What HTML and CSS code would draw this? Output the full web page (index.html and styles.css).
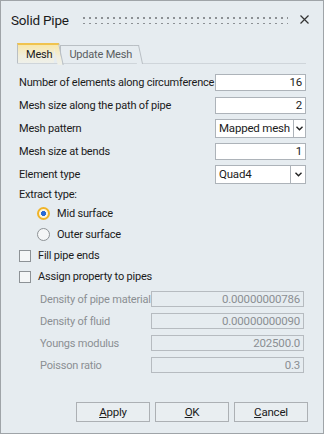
FILE: index.html
```html
<!DOCTYPE html>
<html lang="en">
<head>
    <meta charset="UTF-8">
    <title>Solid Pipe</title>
    <link rel="stylesheet" href="styles.css">
</head>
<body>
    <div class="dialog">
        <div class="titlebar">
            <span class="title">Solid Pipe</span>
            <span class="grip"></span>
            <svg class="close" width="9" height="9" viewBox="0 0 9 9">
                <path d="M0.5 0.5 L8.5 8.5 M8.5 0.5 L0.5 8.5" stroke="#333" stroke-width="1.2" fill="none"/>
            </svg>
        </div>
        <div class="tabs">
            <span class="tab active">Mesh</span>
            <span class="tab">Update Mesh</span>
        </div>
        <div class="form">
            <div class="row"><span class="label">Number of elements along circumference</span><div class="field num">16</div></div>
            <div class="row"><span class="label">Mesh size along the path of pipe</span><div class="field num">2</div></div>
            <div class="row">
                <span class="label">Mesh pattern</span>
                <div class="select"><span class="value">Mapped mesh</span><span class="arrow"><svg width="7" height="5" viewBox="0 0 7 5"><path d="M0.5 0.8 L3.5 3.8 L6.5 0.8" stroke="#222" stroke-width="1.4" fill="none"/></svg></span></div>
            </div>
            <div class="row"><span class="label">Mesh size at bends</span><div class="field num">1</div></div>
            <div class="row">
                <span class="label">Element type</span>
                <div class="select"><span class="value">Quad4</span><span class="arrow"><svg width="7" height="5" viewBox="0 0 7 5"><path d="M0.5 0.8 L3.5 3.8 L6.5 0.8" stroke="#222" stroke-width="1.4" fill="none"/></svg></span></div>
            </div>
        </div>
        <div class="group-label">Extract type:</div>
        <div class="option radio-row"><span class="radio checked"></span>Mid surface</div>
        <div class="option radio-row"><span class="radio"></span>Outer surface</div>
        <div class="option"><span class="check"></span>Fill pipe ends</div>
        <div class="option"><span class="check"></span>Assign property to pipes</div>
        <div class="props">
            <div class="prop"><span class="label">Density of pipe material</span><div class="field disabled">0.00000000786</div></div>
            <div class="prop"><span class="label">Density of fluid</span><div class="field disabled">0.00000000090</div></div>
            <div class="prop"><span class="label">Youngs modulus</span><div class="field disabled">202500.0</div></div>
            <div class="prop"><span class="label">Poisson ratio</span><div class="field disabled">0.3</div></div>
        </div>
        <div class="buttons">
            <button><u>A</u>pply</button>
            <button><u>O</u>K</button>
            <button><u>C</u>ancel</button>
        </div>
    </div>
</body>
</html>
```

FILE: styles.css
```css
body {
    margin: 0;
    font-family: Roboto, "Liberation Sans", sans-serif;
    font-size: 11px;
    letter-spacing: -0.2px;
    color: #1b1b1b;
}
.dialog {
    width: 324px;
    height: 434px;
    box-sizing: border-box;
    border: 1px solid #9fa4a8;
    background: #e6ecf0;
    display: flex;
    flex-direction: column;
}
.titlebar {
    height: 37px;
    display: flex;
    align-items: center;
    padding: 0 9px 0 10px;
}
.title {
    font-size: 13.5px;
    letter-spacing: -0.2px;
    color: #1a1a1a;
}
.grip {
    flex: 1;
    height: 8px;
    margin: 0 12px 0 13px;
    background-image: radial-gradient(circle, #8c9094 0.9px, transparent 1.3px);
    background-size: 6px 6px;
    background-position: -1px -1px;
}
.close {
    display: block;
    margin-right: 5px;
}
.tabs {
    display: flex;
    align-items: flex-end;
    margin: 5px 17px 0 16px;
    height: 20px;
    border-bottom: 1px solid #cfd5da;
}
.tab {
    position: relative;
    height: 17px;
    line-height: 17px;
    padding: 0 2px 0 8px;
    margin-right: 6px;
    border: 1px solid #b9bfc4;
    border-right: none;
    border-bottom: none;
    color: #5a5e62;
    background: #e6ecf0;
}
.tab::after {
    content: "";
    position: absolute;
    top: -1px;
    right: -5px;
    width: 5px;
    height: 18px;
    border-right: 1px solid #b9bfc4;
    border-top: 1px solid #b9bfc4;
    background: inherit;
    transform: skewX(12deg);
    transform-origin: top left;
}
.tab.active {
    height: 18px;
    line-height: 19px;
    color: #1b1b1b;
    border-top: 2px solid #f0c34e;
    background: linear-gradient(#f8e7ab, #f1eedd 60%, #eef0ea);
    z-index: 1;
}
.tab.active::after {
    top: -2px;
    height: 20px;
    border-top: 2px solid #f0c34e;
    background: linear-gradient(#f8e7ab, #f1eedd 60%, #eef0ea);
}
.form {
    margin: 7px 17px 0 18px;
}
.row {
    height: 23px;
    display: flex;
    align-items: center;
}
.label {
    flex: 1;
    min-width: 0;
    white-space: nowrap;
}
.field {
    flex: none;
    width: 91px;
    height: 17px;
    box-sizing: border-box;
    border: 1px solid #adb3b9;
    background: #fff;
    padding: 0 3px;
    line-height: 15px;
    font-size: 11.5px;
}
.num {
    text-align: right;
}
.select {
    flex: none;
    width: 91px;
    height: 19px;
    display: flex;
    font-size: 11.5px;
}
.select .value {
    flex: 1;
    box-sizing: border-box;
    border: 1px solid #adb3b9;
    background: #fff;
    padding: 0 3px;
    line-height: 17px;
    white-space: nowrap;
}
.select .arrow {
    width: 15px;
    box-sizing: border-box;
    border: 1px solid #adb3b9;
    border-left: none;
    background: #fff;
    display: flex;
    align-items: center;
    justify-content: center;
}
.group-label {
    height: 17px;
    line-height: 17px;
    padding-left: 18px;
}
.option {
    height: 21px;
    display: flex;
    align-items: center;
    padding-left: 18px;
}
.radio-row {
    padding-left: 36px;
}
.radio {
    width: 13px;
    height: 13px;
    box-sizing: border-box;
    border: 1px solid #8d9296;
    border-radius: 50%;
    background: #f4f6f7;
    margin-right: 7px;
}
.radio.checked {
    border: 2px solid #f0b429;
    background: radial-gradient(circle, #2a6bd6 2.3px, #fbf5e0 2.8px);
}
.check {
    width: 12px;
    height: 12px;
    box-sizing: border-box;
    border: 1px solid #8d9296;
    background: #f4f6f7;
    margin-right: 7px;
}
.props {
    margin: 1px 19px 0 39px;
}
.prop {
    height: 22px;
    display: flex;
    align-items: center;
    color: #8b8f93;
}
.field.disabled {
    width: 153px;
    background: transparent;
    border-color: #b6bbc0;
    color: #8b8f93;
    text-align: right;
    line-height: 14px;
    height: 16px;
}
.buttons {
    margin-top: auto;
    display: flex;
    justify-content: flex-end;
    gap: 5px;
    padding: 0 15px 11px 0;
}
.buttons button {
    width: 74px;
    height: 20px;
    border: 1px solid #acb0b4;
    background: #e9eef1;
    font-family: inherit;
    font-size: 11.5px;
    letter-spacing: inherit;
    color: #1b1b1b;
    padding: 0;
}
```
